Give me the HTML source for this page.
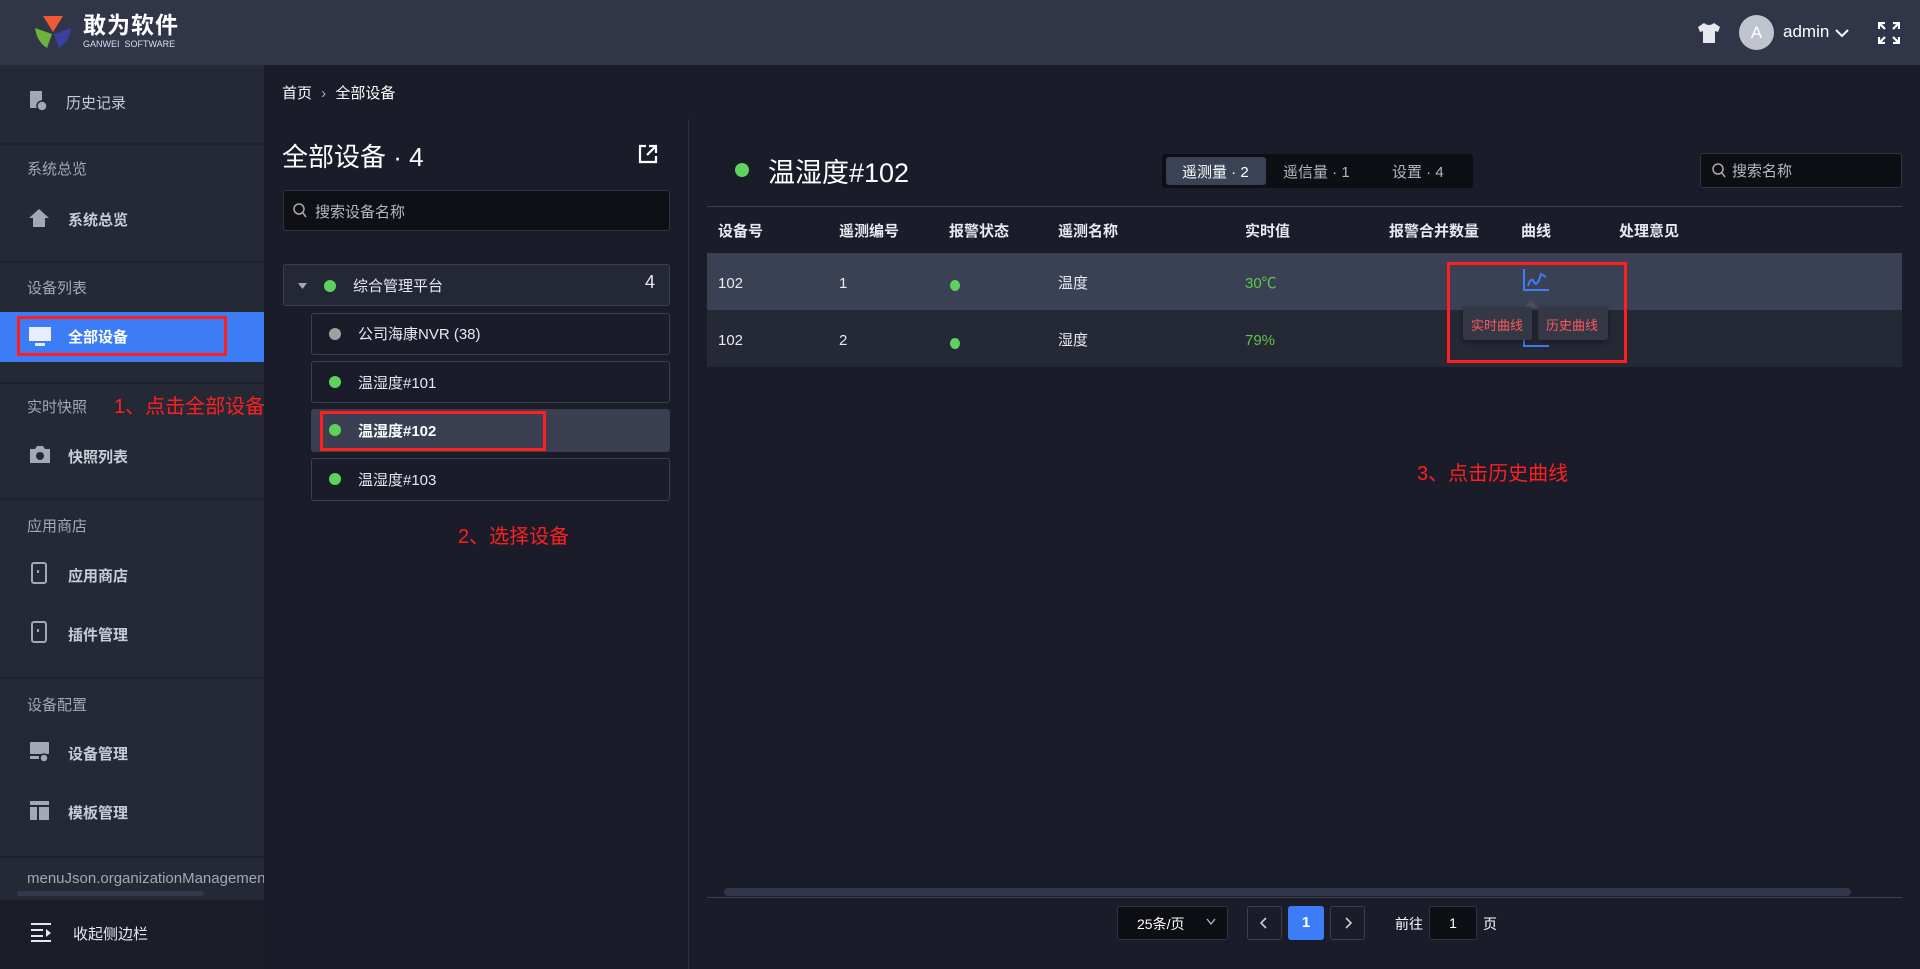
<!DOCTYPE html>
<html><head><meta charset="utf-8">
<style>
*{margin:0;padding:0;box-sizing:border-box}
body{width:1920px;height:969px;overflow:hidden;background:#1a1d29;font-family:"Liberation Sans","Noto Sans CJK SC",sans-serif;color:#e6e8ee;position:relative}
.a{position:absolute;white-space:nowrap}
.hdr{left:0;top:0;width:1920px;height:65px;background:#303648}
.side{left:0;top:65px;width:264px;height:835px;background:#252835}
.bot{left:0;top:900px;width:264px;height:69px;background:#1b1e29}
.div{position:absolute;left:0;width:264px;height:2px;background:#1e2130}
.lbl{font-size:15px;color:#a4a8b4}
.it{font-size:15px;color:#c8ccd6;font-weight:bold}
.red{color:#ff1f1f;font-size:20px}
.box{position:absolute;border:1px solid #3a3f4e;border-radius:3px}
.dot{position:absolute;width:12px;height:12px;border-radius:50%;background:#5dd35d}
.th{font-size:15px;font-weight:bold;color:#e8eaf0;top:220px}
.td{font-size:15px;color:#e8eaf0;line-height:20px}
</style></head><body>
<div class="a hdr"></div>
<svg class="a" style="left:33px;top:14px" width="40" height="36" viewBox="0 0 40 36">
<path d="M10 2 L30 2 L20 18 Z" fill="#f05a32"/>
<path d="M2 14 L19 20 L14 34 Q4 28 2 14Z" fill="#6bb33a"/>
<path d="M38 14 L21 20 L26 34 Q36 28 38 14Z" fill="#3b3f9f"/>
</svg>
<div class="a" style="left:83px;top:11px;font-size:23px;line-height:28px;font-weight:bold;color:#fff;letter-spacing:1px">敢为软件</div>
<div class="a" style="left:83px;top:39px;font-size:9px;line-height:10px;color:#dde">GANWEI&nbsp; SOFTWARE</div>
<svg class="a" style="left:1697px;top:22px" width="24" height="22" viewBox="0 0 24 22"><path d="M7 1 L1 5 L3 10 L6 9 L6 21 L18 21 L18 9 L21 10 L23 5 L17 1 Q12 5 7 1Z" fill="#e6e8ee"/></svg>
<div class="a" style="left:1739px;top:15px;width:35px;height:35px;border-radius:50%;background:#c0c4cc;color:#fff;font-size:17px;text-align:center;line-height:35px">A</div>
<div class="a" style="left:1783px;top:22px;font-size:17px;color:#fff">admin</div>
<svg class="a" style="left:1834px;top:27px" width="16" height="12"><path d="M2 3 L8 9 L14 3" stroke="#fff" stroke-width="2" fill="none"/></svg>
<svg class="a" style="left:1878px;top:22px" width="22" height="22" viewBox="0 0 22 22" stroke="#fff" stroke-width="2.2" fill="none"><path d="M1 7V1H7M15 1H21V7M21 15V21H15M7 21H1V15M1 1L7 7M21 1L15 7M21 21L15 15M1 21L7 15"/></svg>

<div class="a side"></div>
<svg class="a" style="left:29px;top:90px" width="18" height="22"><rect x="1" y="1" width="12" height="17" fill="#a4a8b4"/><circle cx="13" cy="16" r="5" fill="#a4a8b4" stroke="#252835" stroke-width="1.5"/></svg>
<div class="a it" style="left:66px;top:92px;font-weight:normal">历史记录</div>
<div class="div" style="top:143px"></div>
<div class="a lbl" style="left:27px;top:158px">系统总览</div>
<svg class="a" style="left:28px;top:208px" width="22" height="20"><path d="M11 1 L21 10 L17 10 L17 19 L5 19 L5 10 L1 10Z" fill="#a4a8b4"/></svg>
<div class="a it" style="left:68px;top:209px">系统总览</div>
<div class="div" style="top:261px"></div>
<div class="a lbl" style="left:27px;top:277px">设备列表</div>
<div class="a" style="left:0;top:312px;width:264px;height:50px;background:#3d7cf7"></div>
<div class="a" style="left:17px;top:316px;width:210px;height:40px;border:3px solid #ff1f1f"></div>
<svg class="a" style="left:28px;top:326px" width="24" height="22"><rect x="1" y="1" width="22" height="14" fill="#e8eeff"/><rect x="7" y="17" width="10" height="3" fill="#e8eeff"/></svg>
<div class="a it" style="left:68px;top:326px;color:#fff">全部设备</div>
<div class="div" style="top:382px"></div>
<div class="a lbl" style="left:27px;top:396px">实时快照</div>
<div class="a red" style="left:114px;top:390px">1、点击全部设备</div>
<svg class="a" style="left:29px;top:444px" width="22" height="20"><path d="M1 5 H6 L8 2 H14 L16 5 H21 V19 H1Z" fill="#a4a8b4"/><circle cx="11" cy="12" r="4" fill="#252835"/></svg>
<div class="a it" style="left:68px;top:446px">快照列表</div>
<div class="div" style="top:498px"></div>
<div class="a lbl" style="left:27px;top:515px">应用商店</div>
<svg class="a" style="left:31px;top:562px" width="16" height="22"><rect x="1" y="1" width="14" height="20" rx="2" fill="none" stroke="#a4a8b4" stroke-width="2"/><rect x="6" y="8" width="2" height="3" fill="#a4a8b4"/></svg>
<div class="a it" style="left:68px;top:565px">应用商店</div>
<svg class="a" style="left:31px;top:621px" width="16" height="22"><rect x="1" y="1" width="14" height="20" rx="2" fill="none" stroke="#a4a8b4" stroke-width="2"/><rect x="6" y="8" width="2" height="3" fill="#a4a8b4"/></svg>
<div class="a it" style="left:68px;top:624px">插件管理</div>
<div class="div" style="top:677px"></div>
<div class="a lbl" style="left:27px;top:694px">设备配置</div>
<svg class="a" style="left:29px;top:741px" width="22" height="22"><rect x="1" y="1" width="19" height="12" rx="1" fill="#a4a8b4"/><rect x="1" y="15" width="9" height="3" fill="#a4a8b4"/><circle cx="15" cy="17" r="4" fill="#a4a8b4" stroke="#252835" stroke-width="1.5"/></svg>
<div class="a it" style="left:68px;top:743px">设备管理</div>
<svg class="a" style="left:30px;top:801px" width="20" height="20"><rect x="0" y="0" width="19" height="4" fill="#a4a8b4"/><rect x="0" y="6" width="7" height="13" fill="#a4a8b4"/><rect x="9" y="6" width="10" height="13" fill="#a4a8b4"/></svg>
<div class="a it" style="left:68px;top:802px">模板管理</div>
<div class="div" style="top:856px"></div>
<div class="a" style="left:27px;top:870px;font-size:15px;color:#a4a8b4;width:237px;overflow:hidden">menuJson.organizationManagement</div>
<div class="a" style="left:17px;top:891px;width:187px;height:5px;border-radius:3px;background:#33384a"></div>
<div class="a bot"></div>
<svg class="a" style="left:30px;top:922px" width="22" height="20" stroke="#e6e8ee" stroke-width="2"><path d="M1 2H21M1 8H13M1 14H13M1 19H21"/><path d="M16 7 L21 11 L16 15Z" fill="#e6e8ee" stroke="none"/></svg>
<div class="a" style="left:73px;top:923px;font-size:15px;color:#e6e8ee">收起侧边栏</div>

<div class="a" style="left:282px;top:82px;font-size:15px;color:#fff">首页 <span style="color:#aaa;margin:0 5px">›</span> 全部设备</div>
<div class="a" style="left:688px;top:119px;width:1px;height:850px;background:#2c3040"></div>

<div class="a" style="left:282px;top:137px;font-size:26px;color:#fff">全部设备 · 4</div>
<svg class="a" style="left:638px;top:144px" width="20" height="20" stroke="#fff" stroke-width="2.2" fill="none"><path d="M8 2H2V18H18V12M11 2H18V9M18 2L9 11"/></svg>
<div class="a" style="left:283px;top:190px;width:387px;height:41px;background:#0e1016;border:1px solid #2f3342;border-radius:3px"></div>
<svg class="a" style="left:293px;top:203px" width="14" height="15" stroke="#aaa" stroke-width="1.5" fill="none"><circle cx="6" cy="6" r="5"/><path d="M10 10L13 14"/></svg>
<div class="a" style="left:315px;top:201px;font-size:15px;color:#b4b8c4">搜索设备名称</div>
<div class="box" style="left:283px;top:264px;width:387px;height:42px;background:#242735"></div>
<svg class="a" style="left:298px;top:283px" width="9" height="6"><path d="M0 0H9L4.5 6Z" fill="#aaa"/></svg>
<div class="dot" style="left:324px;top:280px"></div>
<div class="a" style="left:353px;top:275px;font-size:15px;color:#e6e8ee">综合管理平台</div>
<div class="a" style="left:645px;top:272px;font-size:18px;color:#e6e8ee">4</div>
<div class="box" style="left:311px;top:313px;width:359px;height:42px"></div>
<div class="dot" style="left:329px;top:328px;background:#a0a0a0"></div>
<div class="a" style="left:358px;top:323px;font-size:15px">公司海康NVR (38)</div>
<div class="box" style="left:311px;top:361px;width:359px;height:42px"></div>
<div class="dot" style="left:329px;top:376px"></div>
<div class="a" style="left:358px;top:372px;font-size:15px">温湿度#101</div>
<div class="box" style="left:311px;top:409px;width:359px;height:43px;background:#3a4052"></div>
<div class="a" style="left:320px;top:411px;width:226px;height:40px;border:3px solid #ff1f1f"></div>
<div class="dot" style="left:329px;top:424px"></div>
<div class="a" style="left:358px;top:420px;font-size:15px;color:#fff;font-weight:bold">温湿度#102</div>
<div class="box" style="left:311px;top:458px;width:359px;height:43px"></div>
<div class="dot" style="left:329px;top:473px"></div>
<div class="a" style="left:358px;top:469px;font-size:15px">温湿度#103</div>
<div class="a red" style="left:458px;top:520px">2、选择设备</div>

<div class="dot" style="left:735px;top:163px;width:14px;height:14px"></div>
<div class="a" style="left:768px;top:151px;font-size:27px;color:#fff">温湿度#102</div>
<div class="a" style="left:1162px;top:154px;width:311px;height:34px;background:#0d0f15;border-radius:3px"></div>
<div class="a" style="left:1166px;top:157px;width:100px;height:28px;background:#3a4255;border-radius:3px"></div>
<div class="a" style="left:1182px;top:161px;font-size:15px;color:#fff">遥测量 · 2</div>
<div class="a" style="left:1283px;top:161px;font-size:15px;color:#b4b8c4">遥信量 · 1</div>
<div class="a" style="left:1392px;top:161px;font-size:15px;color:#b4b8c4">设置 · 4</div>
<div class="a" style="left:1700px;top:153px;width:202px;height:35px;background:#0d0f15;border:1px solid #2f3342;border-radius:3px"></div>
<svg class="a" style="left:1712px;top:163px" width="14" height="15" stroke="#aaa" stroke-width="1.5" fill="none"><circle cx="6" cy="6" r="5"/><path d="M10 10L13 14"/></svg>
<div class="a" style="left:1732px;top:160px;font-size:15px;color:#b4b8c4">搜索名称</div>
<div class="a" style="left:707px;top:206px;width:1195px;height:1px;background:#3a3f4e"></div>
<div class="a th" style="left:718px">设备号</div>
<div class="a th" style="left:839px">遥测编号</div>
<div class="a th" style="left:949px">报警状态</div>
<div class="a th" style="left:1058px">遥测名称</div>
<div class="a th" style="left:1245px">实时值</div>
<div class="a th" style="left:1389px">报警合并数量</div>
<div class="a th" style="left:1521px">曲线</div>
<div class="a th" style="left:1619px">处理意见</div>
<div class="a" style="left:707px;top:253px;width:1195px;height:57px;background:#3a4154"></div>
<div class="a" style="left:707px;top:310px;width:1195px;height:57px;background:#252835"></div>
<div class="a td" style="left:718px;top:274px">102</div>
<div class="a td" style="left:839px;top:274px">1</div>
<div class="dot" style="left:950px;top:280px;width:10px;height:11px"></div>
<div class="a td" style="left:1058px;top:274px">温度</div>
<div class="a td" style="left:1245px;top:274px;color:#5ac84a">30℃</div>
<div class="a td" style="left:718px;top:331px">102</div>
<div class="a td" style="left:839px;top:331px">2</div>
<div class="dot" style="left:950px;top:338px;width:10px;height:11px"></div>
<div class="a td" style="left:1058px;top:331px">湿度</div>
<div class="a td" style="left:1245px;top:331px;color:#5ac84a">79%</div>
<svg class="a" style="left:1522px;top:268px" width="28" height="24" stroke="#3d7cf7" stroke-width="2" fill="none"><path d="M2 1V22H27"/><path d="M6 18 Q9 8 12 14 T19 6 L24 9"/></svg>
<svg class="a" style="left:1522px;top:334px" width="28" height="14" stroke="#3d7cf7" stroke-width="2" fill="none"><path d="M2 0V12H27"/></svg>
<svg class="a" style="left:1524px;top:300px" width="14" height="8"><path d="M0 8L7 0L14 8Z" fill="#4a4f60"/></svg>
<div class="a" style="left:1463px;top:307px;width:69px;height:33px;background:#333746;border-radius:3px;box-shadow:0 2px 6px rgba(0,0,0,.4)"></div>
<div class="a" style="left:1471px;top:315px;font-size:13px;color:#ff5a5a">实时曲线</div>
<div class="a" style="left:1538px;top:307px;width:70px;height:33px;background:#333746;border-radius:3px;box-shadow:0 2px 6px rgba(0,0,0,.4)"></div>
<div class="a" style="left:1546px;top:315px;font-size:13px;color:#ff5a5a">历史曲线</div>
<div class="a" style="left:1447px;top:262px;width:180px;height:101px;border:3px solid #ff1f1f"></div>
<div class="a red" style="left:1417px;top:457px">3、点击历史曲线</div>

<div class="a" style="left:724px;top:888px;width:1127px;height:8px;border-radius:4px;background:#31364a"></div>
<div class="a" style="left:707px;top:897px;width:1195px;height:1px;background:#3a3f4e"></div>
<div class="a" style="left:1117px;top:906px;width:111px;height:34px;background:#0d0f15;border:1px solid #2f3342;border-radius:3px"></div>
<div class="a" style="left:1137px;top:914px;font-size:14px;color:#fff">25条/页</div>
<svg class="a" style="left:1206px;top:918px" width="10" height="8" stroke="#bbb" stroke-width="1.3" fill="none"><path d="M1 1L5 6L9 1"/></svg>
<div class="a" style="left:1247px;top:906px;width:35px;height:34px;border:1px solid #3a3f4e;border-radius:3px"></div>
<svg class="a" style="left:1259px;top:917px" width="10" height="12" stroke="#ccc" stroke-width="1.6" fill="none"><path d="M7 1L2 6L7 11"/></svg>
<div class="a" style="left:1288px;top:906px;width:36px;height:34px;background:#3d7cf7;border-radius:3px;color:#fff;font-size:15px;text-align:center;line-height:34px;font-weight:bold">1</div>
<div class="a" style="left:1330px;top:906px;width:35px;height:34px;border:1px solid #3a3f4e;border-radius:3px"></div>
<svg class="a" style="left:1343px;top:917px" width="10" height="12" stroke="#ccc" stroke-width="1.6" fill="none"><path d="M3 1L8 6L3 11"/></svg>
<div class="a" style="left:1395px;top:914px;font-size:14px;color:#fff">前往</div>
<div class="a" style="left:1429px;top:906px;width:48px;height:34px;background:#0d0f15;border:1px solid #2f3342;border-radius:3px;color:#fff;font-size:14px;text-align:center;line-height:32px">1</div>
<div class="a" style="left:1483px;top:914px;font-size:14px;color:#fff">页</div>
</body></html>
